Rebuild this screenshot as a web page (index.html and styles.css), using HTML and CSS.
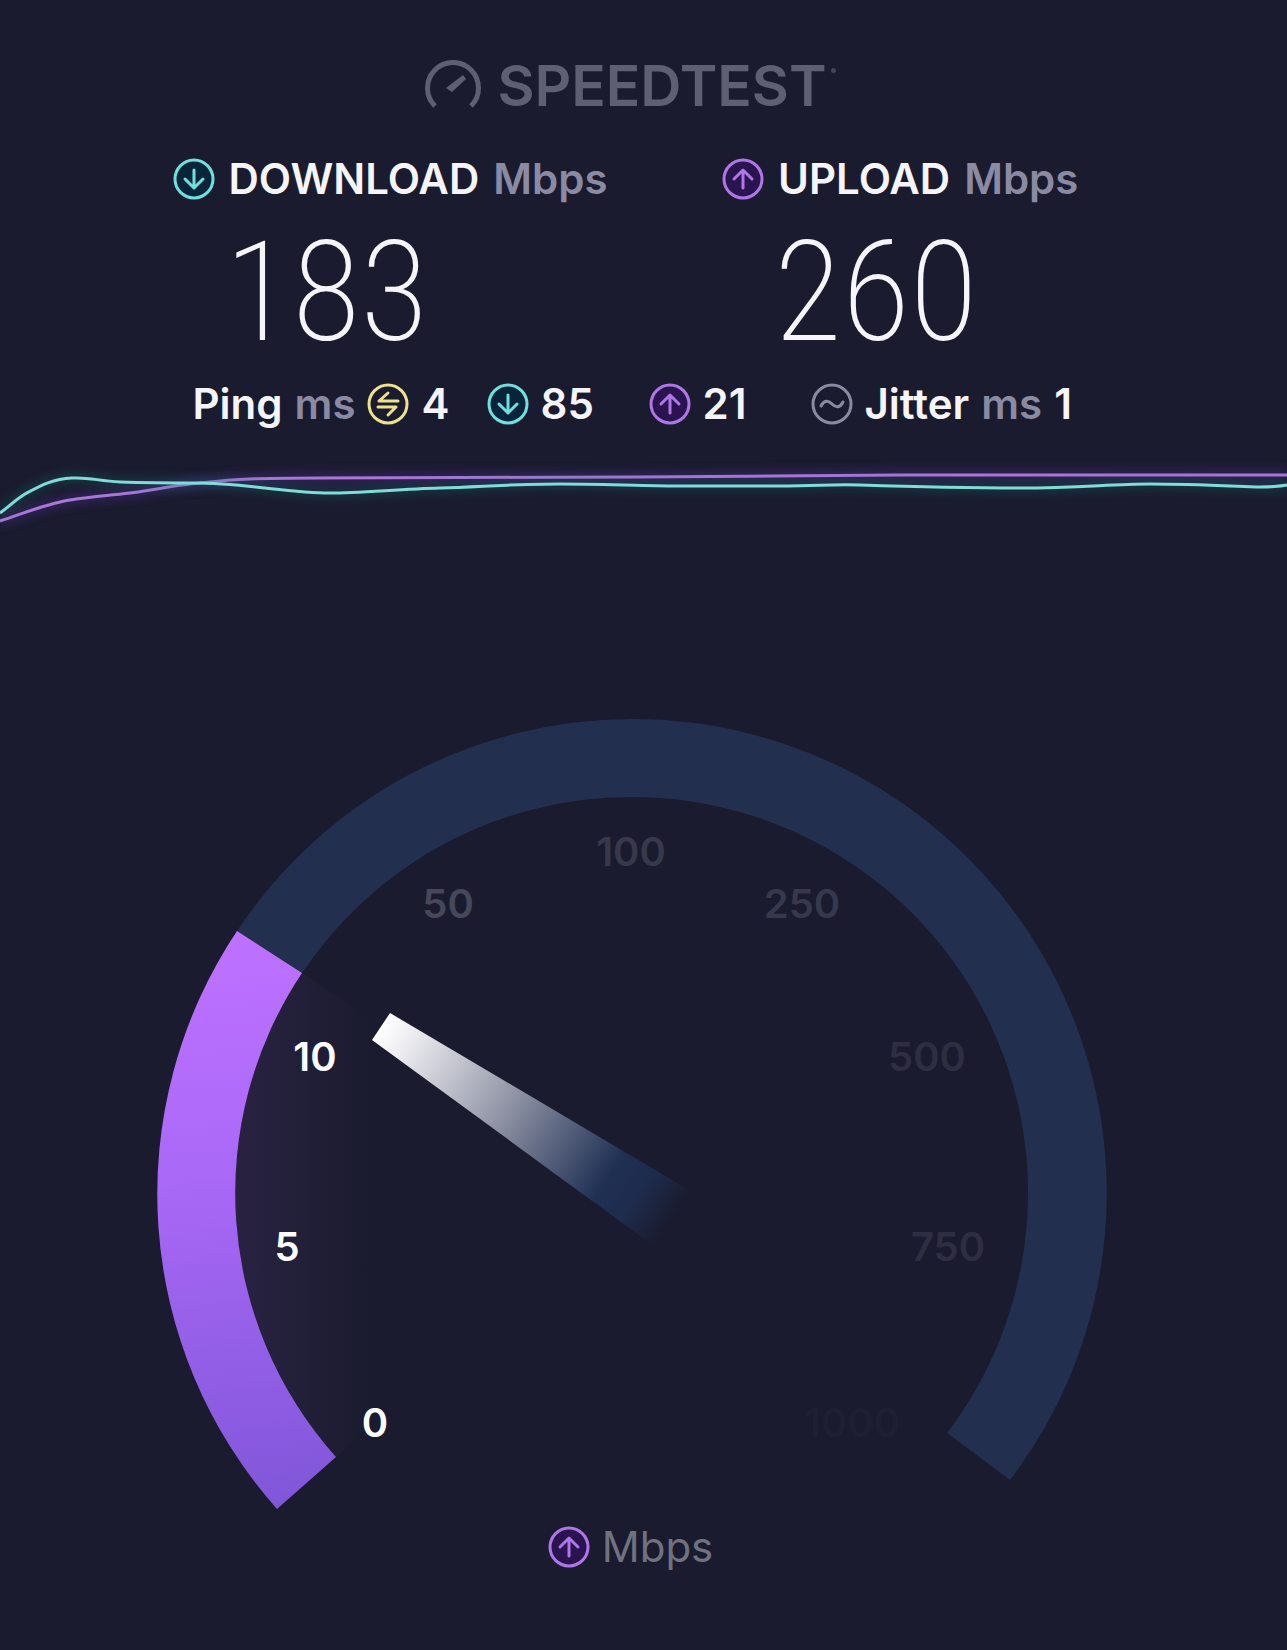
FILE: index.html
```html
<!DOCTYPE html>
<html lang="en">
<head>
  <meta charset="UTF-8">
  <meta name="viewport" content="width=device-width, initial-scale=1.0">
  <title>Speedtest</title>
  <link rel="stylesheet" href="styles.css">
</head>
<body>
  <svg class="sprite" aria-hidden="true">
    <symbol id="icon-down" viewBox="0 0 42 42">
      <circle cx="21" cy="21" r="19"/>
      <path d="M21 12v17M12 21l9 9 9-9"/>
    </symbol>
    <symbol id="icon-up" viewBox="0 0 42 42">
      <circle cx="21" cy="21" r="19"/>
      <path d="M21 30V13M12 21l9-9 9 9"/>
    </symbol>
    <symbol id="icon-ping" viewBox="0 0 42 42">
      <circle cx="21" cy="21" r="19"/>
      <path d="M31 18H12l9-8M11 24h18l-8 8"/>
    </symbol>
    <symbol id="icon-jitter" viewBox="0 0 42 42">
      <circle cx="21" cy="21" r="19"/>
      <path d="M10 23c3-6 7-6 11-2s8 4 11-2"/>
    </symbol>
  </svg>

  <main class="speedtest">
    <header class="logo">
      <svg class="logo-mark" viewBox="0 0 56 52" aria-hidden="true">
        <path class="logo-arc" d="M10 46A25.500 25.500 0 1 1 46 46"/>
        <path class="logo-needle" d="M38 15l3 4-14 13-6-4z"/>
      </svg>
      <h1 class="logo-text">SPEEDTEST</h1>
      <span class="logo-reg"></span>
    </header>

    <section class="results">
      <div class="result">
        <h2 class="label">
          <svg class="icon down"><use href="#icon-down"/></svg>
          DOWNLOAD <span class="unit">Mbps</span>
        </h2>
        <p class="value">183</p>
      </div>
      <div class="result">
        <h2 class="label">
          <svg class="icon up"><use href="#icon-up"/></svg>
          UPLOAD <span class="unit">Mbps</span>
        </h2>
        <p class="value">260</p>
      </div>
    </section>

    <section class="latency">
      <div class="stat">
        <span>Ping</span> <span class="unit">ms</span>
        <svg class="icon ping"><use href="#icon-ping"/></svg>
        <span>4</span>
      </div>
      <div class="stat">
        <svg class="icon down"><use href="#icon-down"/></svg>
        <span>85</span>
      </div>
      <div class="stat">
        <svg class="icon up"><use href="#icon-up"/></svg>
        <span>21</span>
      </div>
      <div class="stat">
        <svg class="icon jitter"><use href="#icon-jitter"/></svg>
        <span>Jitter</span> <span class="unit">ms</span>
        <span>1</span>
      </div>
    </section>

    <svg class="chart" viewBox="0 0 1287 100" aria-hidden="true">
      <path class="line line-up" d="M0 71C25 63 45 54 70 50S105 46 130 43S170 36 190 34S225 30 250 29S300 28 320 28C430 27 540 27 640 27S820 25 900 25H1287"/>
      <path class="line line-down" d="M0 63C10 56 15 50 25 44C40 36 52 29 72 28C90 27 98 31 120 32C150 33 175 33 200 33C250 34 290 43 330 43C360 43 400 39 440 38S510 34 560 34S650 36 680 36S740 36 780 36S830 34 860 35S960 38 1020 38S1110 34 1150 34S1230 36 1260 37Q1275 37 1287 35"/>
    </svg>

    <svg class="gauge" viewBox="0 0 1287 823" role="img" aria-label="Upload speed gauge">
      <defs>
        <linearGradient id="progress" gradientUnits="userSpaceOnUse" x1="200" y1="230" x2="260" y2="809">
          <stop offset="0" stop-color="#bf71ff"/>
          <stop offset="0.400" stop-color="#ab69f8"/>
          <stop offset="1" stop-color="#8056d8"/>
        </linearGradient>
        <linearGradient id="glow" gradientUnits="userSpaceOnUse" x1="235" y1="0" x2="375" y2="0">
          <stop offset="0" stop-color="#a05fe0" stop-opacity="0.110"/>
          <stop offset="1" stop-color="#a05fe0" stop-opacity="0"/>
        </linearGradient>
        <linearGradient id="needle" gradientUnits="userSpaceOnUse" x1="381" y1="327" x2="674" y2="517">
          <stop offset="0" stop-color="#ffffff"/>
          <stop offset="0.080" stop-color="#eeeef2"/>
          <stop offset="0.440" stop-color="#8c90a2"/>
          <stop offset="0.780" stop-color="#1f3054"/>
          <stop offset="0.880" stop-color="#1f3054" stop-opacity="0.800"/>
          <stop offset="1" stop-color="#1f3054" stop-opacity="0"/>
        </linearGradient>
      </defs>
      <path class="track" d="M237 231A474 474 0 0 1 631 19A474 474 0 0 1 1010 780L947 733A396 396 0 0 0 631 97A396 396 0 0 0 302 273Z"/>
      <path fill="url(#glow)" d="M302 273A396 396 0 0 0 336 757L631 493Z"/>
      <path fill="url(#progress)" d="M237 231A474 474 0 0 0 277 809L336 757A396 396 0 0 1 302 273Z"/>
      <path fill="url(#needle)" d="M390 313L372 340L658 549L694 493Z"/>
      <g class="ticks">
        <text class="on" x="375" y="737">0</text>
        <text class="on" x="287" y="561">5</text>
        <text class="on" x="315" y="371">10</text>
        <text class="near" x="448" y="218">50</text>
        <text class="mid" x="631" y="166">100</text>
        <text class="mid" x="802" y="218">250</text>
        <text class="far" x="927" y="371">500</text>
        <text class="far" x="948" y="561">750</text>
        <text class="last" x="852" y="737">1000</text>
      </g>
    </svg>

    <footer class="gauge-unit">
      <svg class="icon up"><use href="#icon-up"/></svg>
      <span>Mbps</span>
    </footer>
  </main>
</body>
</html>
```
FILE: styles.css
```css
* {
    margin: 0;
    padding: 0;
    box-sizing: border-box;
}

:root {
    --background: #1a1b2e;
    --text: #f5f5fb;
    --muted: #8a8aa3;
    --down: #6fe0dc;
    --up: #ae76e6;
    --ping: #ece28c;
    --track: #222f4e;
}

body {
    background: var(--background);
    color: var(--text);
    font-family: Inter, "Liberation Sans", sans-serif;
    font-size: 42px;
    font-weight: 600;
    line-height: 48px;
}

.sprite {
    position: absolute;
    width: 0;
    height: 0;
}

.speedtest {
    display: flex;
    flex-direction: column;
    padding: 60px 0 79px;
}

/* the right padding keeps the text rows centred over the dial */
.logo,
.results,
.latency,
.gauge-unit {
    width: 100%;
    max-width: 942px;
    margin: 0 auto;
    padding-right: 26px;
}

.logo {
    display: flex;
    align-items: center;
    justify-content: center;
    color: #5f5f74;
}

.logo-mark {
    width: 56px;
    height: 52px;
    margin-right: 16px;
    fill: none;
}

.logo-arc {
    stroke: currentColor;
    stroke-width: 5;
}

.logo-needle {
    fill: currentColor;
}

.logo-text {
    font-size: 57px;
    font-weight: 600;
    line-height: 48px;
}

.logo-reg {
    align-self: flex-start;
    width: 5px;
    height: 5px;
    margin: 8px 0 0 4px;
    border-radius: 50%;
    background: #45455a;
}

.results {
    display: grid;
    grid-template-columns: 3fr 2fr;
    margin-top: 43px;
}

.label {
    display: flex;
    align-items: center;
    gap: 14px;
    font-size: 42px;
    font-weight: 600;
    white-space: nowrap;
}

.unit {
    color: var(--muted);
}

.icon {
    flex: none;
    width: 42px;
    height: 42px;
    fill: none;
    stroke-width: 3;
    stroke-linejoin: round;
    stroke-linecap: round;
}

.icon.down {
    stroke: var(--down);
    fill: #07243a;
}

.icon.up {
    stroke: var(--up);
    fill: #2a1450;
}

.icon.ping {
    stroke: var(--ping);
}

.icon.jitter {
    stroke: var(--muted);
}

.value {
    margin-top: 6px;
    padding-left: 52px;
    font-family: "Roboto Condensed", Roboto, sans-serif;
    font-size: 140px;
    font-weight: 200;
    line-height: 166px;
}

.latency {
    display: grid;
    grid-template-columns: 294px 162px 162px auto;
    margin-top: 5px;
    padding-left: 20px;
}

.stat {
    display: flex;
    align-items: center;
    gap: 12px;
    white-space: nowrap;
}

.chart {
    display: block;
    width: 100%;
    margin-top: 22px;
}

.line {
    fill: none;
    stroke-width: 3;
}

.line-up {
    stroke: #a878d8;
    filter: drop-shadow(0 0 6px #6a35c0);
}

.line-down {
    stroke: #7fdcd8;
    filter: drop-shadow(0 0 6px #12756f);
}

.gauge {
    display: block;
    width: 100%;
    margin-top: 150px;
}

.track {
    fill: var(--track);
}

.ticks {
    font-size: 40px;
    font-weight: 600;
    text-anchor: middle;
}

.on {
    fill: #ffffff;
}

.near {
    fill: #47475a;
}

.mid {
    fill: #37384b;
}

.far {
    fill: #2e2e42;
}

.last {
    fill: #1e1f32;
}

.gauge-unit {
    display: flex;
    align-items: center;
    justify-content: center;
    gap: 12px;
    color: #71727f;
    font-weight: 400;
}
```
